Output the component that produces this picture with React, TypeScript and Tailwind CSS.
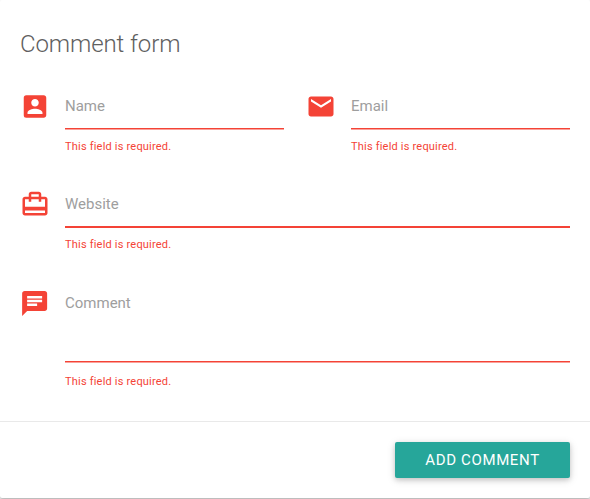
import React from "react";

const icons = {
  account: {
    shift: "translate(0 0.3)",
    d: "M3 5v14a2 2 0 0 0 2 2h14c1.100 0 2-.9 2-2V5c0-1.100-.9-2-2-2H5a2 2 0 0 0-2 2zm12 4c0 1.660-1.340 3-3 3s-3-1.340-3-3 1.340-3 3-3 3 1.340 3 3zm-9 8c0-2 4-3.100 6-3.100s6 1.100 6 3.100v1H6v-1z",
  },
  email: {
    shift: "translate(0 0.3)",
    d: "M20 4H4c-1.100 0-1.990.9-1.990 2L2 18c0 1.100.9 2 2 2h16c1.100 0 2-.9 2-2V6c0-1.100-.9-2-2-2zm0 4l-8 5-8-5V6l8 5 8-5v2z",
  },
  travel: {
    shift: "translate(0 0.2)",
    d: "M20 6h-3V4c0-1.110-.89-2-2-2H9c-1.110 0-2 .89-2 2v2H4c-1.110 0-2 .89-2 2v11c0 1.110.89 2 2 2h16c1.110 0 2-.89 2-2V8c0-1.110-.89-2-2-2zM9 4h6v2H9V4zm11 15H4v-2h16v2zm0-5H4V8h3v2h2V8h6v2h2V8h3v6z",
  },
  chat: {
    shift: "translate(-0.3 -0.35)",
    d: "M20 2H4c-1.100 0-1.990.9-1.990 2L2 22l4-4h14c1.100 0 2-.9 2-2V4c0-1.100-.9-2-2-2zM6 9h12v2H6V9zm8 5H6v-2h8v2zm4-6H6V6h12v2z",
  },
};

type FieldProps = {
  icon: keyof typeof icons;
  label: string;
  iconClass?: string;
  inputClass?: string;
  errorClass?: string;
};

function Field({
  icon,
  label,
  iconClass = "-mt-px",
  inputClass = "h-[37px] pt-[3px] shadow-[0_1px_0_0_#faa19b]",
  errorClass = "mt-[9px]",
}: FieldProps) {
  return (
    <div className="flex min-w-0 flex-1">
      <svg viewBox="0 0 24 24" className={`mr-[15px] size-[30px] shrink-0 fill-[#f44336] ${iconClass}`}>
        <path transform={icons[icon].shift} d={icons[icon].d} />
      </svg>
      <label className="block min-w-0 flex-1">
        <div
          className={`border-b border-[#f44336] text-[15px] leading-[22px] text-[#9e9e9e] ${inputClass}`}
        >
          {label}
        </div>
        <div className={`text-[11px] leading-[18px] tracking-[0.2px] text-[#f44336] ${errorClass}`}>
          This field is required.
        </div>
      </label>
    </div>
  );
}

export default function App() {
  return (
    <div className="h-[499px] w-[590px] overflow-hidden bg-white font-[Roboto,sans-serif]">
      <form className="flex h-[498px] flex-col rounded-[2px] bg-white shadow-[0_2px_5px_0_rgba(0,0,0,0.2),0_2px_2px_0_rgba(0,0,0,0.14)]">
        <div className="h-[421px] px-5 pt-[28px]">
          <h1 className="text-[24px] leading-[32px] font-light tracking-[-0.1px] text-[#606060]">Comment form</h1>
          <div className="mt-[32px] flex h-[97px] gap-[22px]">
            <Field icon="account" label="Name" />
            <Field icon="email" label="Email" />
          </div>
          <div className="flex h-[99px]">
            <Field
              icon="travel"
              label="Website"
              iconClass="mt-0"
              inputClass="h-[38px] pt-[4px] shadow-[0_1px_0_0_#f44336]"
            />
          </div>
          <div className="flex">
            <Field
              icon="chat"
              label="Comment"
              iconClass="mt-px"
              inputClass="h-[74px] pt-[4px] shadow-[0_1px_0_0_#faa19b]"
              errorClass="mt-[11px]"
            />
          </div>
        </div>
        <div className="flex flex-1 justify-end border-t border-[#e9e9e9] px-5 pt-[20px]">
          <button
            type="button"
            className="h-[36px] w-[175px] rounded-[2px] bg-[#26a69a] text-[15px] leading-[36px] tracking-[0.65px] text-white shadow-[0_2px_5px_0_rgba(0,0,0,0.16),0_2px_10px_0_rgba(0,0,0,0.12)]"
          >
            ADD COMMENT
          </button>
        </div>
      </form>
    </div>
  );
}
